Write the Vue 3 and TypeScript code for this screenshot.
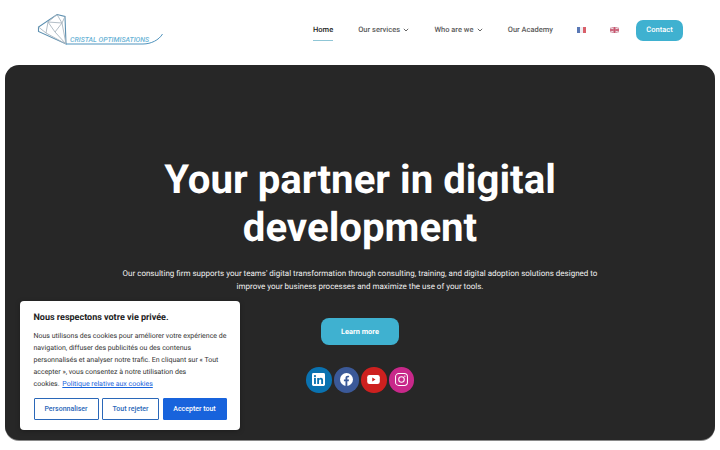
<script setup lang="ts">
const navItems = [
  { label: 'Home', active: true, caret: false },
  { label: 'Our services', active: false, caret: true },
  { label: 'Who are we', active: false, caret: true },
  { label: 'Our Academy', active: false, caret: false },
];
</script>

<template>
  <div class="page">
    <header class="header">
      <a class="logo" href="#">
        <svg width="128" height="36" viewBox="0 0 128 36" fill="none">
          <path d="M20 1.500 28 3.500 29 31 1.500 18.500 1.500 14Z" stroke="#5b8fb0" stroke-width="1.100" />
          <path d="M1.500 14 9 20 29 31M9 20 11 9 20 1.500M11 9 25 10 28 3.500M25 10 29 31M25 10 18 19 11 9M20 1.500 25 10M18 19 29 31" stroke="#a9b6c0" stroke-width="0.900" />
          <path d="M29 31H106C114 31 122 27 125.500 21" stroke="#4f93bd" stroke-width="1" />
          <text x="33" y="29" class="logo-text">CRISTAL OPTIMISATIONS</text>
        </svg>
      </a>
      <nav class="nav">
        <a v-for="item in navItems" :key="item.label" class="nav-link" :class="{ active: item.active }" href="#">
          {{ item.label }}
          <svg v-if="item.caret" class="caret" width="6" height="4" viewBox="0 0 6 4" fill="none">
            <path d="M.8.8 3 3 5.200.8" stroke="#666" stroke-width="1" />
          </svg>
        </a>
        <span class="flag flag-fr"><i></i><i></i><i></i></span>
        <svg class="flag-uk" width="9" height="6" viewBox="0 0 9 6">
          <rect width="9" height="6" fill="#d6a0ae" />
          <path d="M0 0 9 6M9 0 0 6" stroke="#f3e6ea" stroke-width="1" />
          <path d="M4.500 0V6M0 3H9" stroke="#c8566e" stroke-width="1.400" />
        </svg>
        <a class="contact" href="#">Contact</a>
      </nav>
    </header>

    <section class="hero">
      <h1>Your partner in digital development</h1>
      <p>Our consulting firm supports your teams' digital transformation through consulting, training, and digital adoption solutions designed to improve your business processes and maximize the use of your tools.</p>
      <a class="learn" href="#">Learn more</a>
      <div class="socials">
        <a class="social linkedin" href="#">
          <svg width="13" height="13" viewBox="0 0 14 14">
            <rect width="14" height="14" rx="1.500" fill="#fff" />
            <rect x="2.200" y="5.300" width="2" height="6.500" fill="#0a72b0" />
            <circle cx="3.200" cy="3.300" r="1.200" fill="#0a72b0" />
            <path d="M5.600 5.300H7.500V6.200C8 5.500 8.700 5.100 9.600 5.100 11.200 5.100 11.900 6.100 11.900 7.900V11.800H9.900V8.300C9.900 7.400 9.600 6.900 8.900 6.900 8.100 6.900 7.600 7.400 7.600 8.400V11.800H5.600Z" fill="#0a72b0" />
          </svg>
        </a>
        <a class="social facebook" href="#">
          <svg width="13" height="13" viewBox="0 0 14 14">
            <circle cx="7" cy="7" r="7" fill="#fff" />
            <path d="M5.900 14V9H4.200V7H5.900V5.500C5.900 3.800 6.900 2.900 8.400 2.900 9.100 2.900 9.800 3 9.800 3V4.700H9C8.200 4.700 7.900 5.200 7.900 5.700V7H9.700L9.400 9H7.900V14Z" fill="#3b5998" />
          </svg>
        </a>
        <a class="social youtube" href="#">
          <svg width="13" height="9" viewBox="0 0 14 10">
            <rect width="14" height="10" rx="2.500" fill="#fff" />
            <path d="M5.600 2.900 9.200 5 5.600 7.100Z" fill="#cd201f" />
          </svg>
        </a>
        <a class="social instagram" href="#">
          <svg width="13" height="13" viewBox="0 0 14 14" fill="none" stroke="#fff" stroke-width="1.100">
            <rect x=".6" y=".6" width="12.800" height="12.800" rx="3.500" />
            <circle cx="7" cy="7" r="3" />
            <circle cx="10.600" cy="3.400" r=".5" fill="#fff" stroke-width=".5" />
          </svg>
        </a>
      </div>
    </section>

    <aside class="cookie">
      <h2>Nous respectons votre vie privée.</h2>
      <p>Nous utilisons des cookies pour améliorer votre expérience de navigation, diffuser des publicités ou des contenus personnalisés et analyser notre trafic. En cliquant sur « Tout accepter », vous consentez à notre utilisation des<br />cookies. <a href="#">Politique relative aux cookies</a></p>
      <div class="cookie-actions">
        <button type="button" class="btn outline custom">Personnaliser</button>
        <button type="button" class="btn outline reject">Tout rejeter</button>
        <button type="button" class="btn primary">Accepter tout</button>
      </div>
    </aside>
  </div>
</template>

<style>
html, body {
  margin: 0;
  background: #fff;
  overflow: hidden;
}
</style>

<style scoped>
.page {
  position: relative;
  width: 720px;
  height: 450px;
  overflow: hidden;
  font-family: Roboto, "Liberation Sans", sans-serif;
  text-rendering: geometricPrecision;
}

.header {
  height: 65px;
  display: flex;
  align-items: center;
  justify-content: space-between;
  padding: 0 37px 5px 37px;
  box-sizing: border-box;
}

.logo {
  display: block;
  height: 36px;
  margin-top: 2px;
}

.logo-text {
  font: italic 500 7px Roboto, sans-serif;
  fill: #6cb4d6;
}

.nav {
  display: flex;
  align-items: center;
}

.nav-link {
  position: relative;
  font-size: 7.500px;
  font-weight: 500;
  color: #5c5c5c;
  text-decoration: none;
  margin: 0 25px 2px 0;
  white-space: nowrap;
}

.nav-link:nth-child(4) {
  margin-right: 24px;
}

.nav-link.active {
  color: #1c1c1c;
}

.nav-link.active::after {
  content: "";
  position: absolute;
  left: 0;
  right: 0;
  bottom: -7px;
  height: 1px;
  background: #8fc6d6;
}

.caret {
  margin-left: 1.500px;
  vertical-align: 0;
}

.flag {
  display: flex;
  width: 9px;
  height: 6px;
  margin-right: 24px;
}

.flag i {
  flex: 1;
}

.flag-fr i:nth-child(1) { background: #5a78b5; }
.flag-fr i:nth-child(2) { background: #eeeef2; }
.flag-fr i:nth-child(3) { background: #d9606a; }

.flag-uk {
  margin-right: 17px;
}

.contact {
  width: 47px;
  height: 21px;
  line-height: 20px;
  text-align: center;
  background: #3fb1d0;
  color: #fff;
  border-radius: 7px;
  font-size: 7.500px;
  font-weight: 500;
  text-decoration: none;
}

.hero {
  height: 375px;
  margin: 0 5px;
  background: #272727;
  border-radius: 14px;
  box-shadow: 0 1px 0 #8a8a8a;
  display: flex;
  flex-direction: column;
  align-items: center;
  padding-top: 91px;
  box-sizing: border-box;
  color: #fff;
  text-align: center;
}

.hero h1 {
  margin: 0;
  width: 460px;
  font-size: 40.200px;
  line-height: 48px;
  font-weight: 700;
}

.hero p {
  margin: 15px 0 0;
  width: 490px;
  font-size: 8px;
  line-height: 13px;
  color: #f0f0f0;
}

.learn {
  width: 78px;
  height: 27px;
  margin-top: 25px;
  line-height: 27px;
  background: #3fb1d0;
  color: #fff;
  border-radius: 8px;
  font-size: 7.400px;
  font-weight: 700;
  text-decoration: none;
}

.socials {
  display: flex;
  gap: 2px;
  margin-top: 22px;
}

.social {
  width: 25.500px;
  height: 25.500px;
  border-radius: 50%;
  display: flex;
  align-items: center;
  justify-content: center;
}

.linkedin { background: #0a72b0; }
.facebook { background: #3b5998; }
.youtube { background: #cd201f; }
.instagram { background: #c8288a; }

.cookie {
  position: absolute;
  left: 20px;
  top: 301px;
  width: 220px;
  height: 129px;
  box-sizing: border-box;
  padding: 11px 13.500px 0;
  background: #fff;
  border-radius: 4px;
  box-shadow: 0 1px 5px rgba(0, 0, 0, 0.25);
}

.cookie h2 {
  margin: 0;
  font-size: 9px;
  line-height: 12px;
  font-weight: 700;
  color: #212121;
}

.cookie p {
  margin: 6px 0 0;
  font-size: 7px;
  line-height: 12px;
  color: #333;
}

.cookie p a {
  color: #1863dc;
  margin-left: 1px;
}

.cookie-actions {
  display: flex;
  justify-content: space-between;
  margin-top: 8px;
}

.btn {
  height: 22px;
  padding: 0;
  font: 500 7px Roboto, sans-serif;
  border-radius: 1px;
  box-sizing: border-box;
}

.custom { width: 65px; }
.reject { width: 57px; }

.outline {
  background: #fff;
  border: 1.500px solid #2a67b8;
  color: #2a67b8;
}

.primary {
  width: 64px;
  background: #1863dc;
  border: 1px solid #1863dc;
  color: #fff;
}
</style>
